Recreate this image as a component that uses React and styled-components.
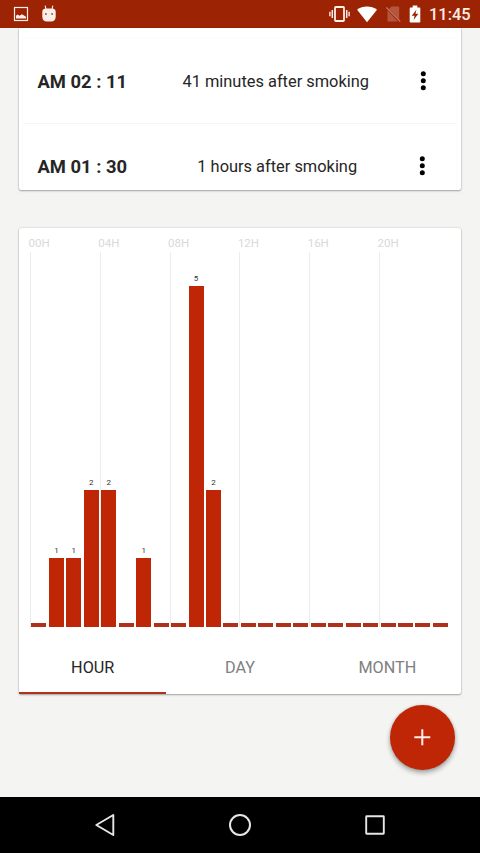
import React from 'react';
import styled, { createGlobalStyle } from 'styled-components';

const GlobalStyle = createGlobalStyle`
  * {
    box-sizing: border-box;
  }

  body {
    margin: 0;
    background: #f4f4f3;
    font-family: Roboto, sans-serif;
  }
`;

const Screen = styled.div`
  display: flex;
  flex-direction: column;
  width: 480px;
  height: 853px;
  overflow: hidden;
  background: #f4f4f3;
`;

const StatusBar = styled.header`
  flex: none;
  display: flex;
  align-items: center;
  justify-content: space-between;
  height: 28px;
  padding: 0 10px 0 13px;
  background: #9c2404;
  color: #fbeee9;
`;

const StatusGroup = styled.div`
  display: flex;
  align-items: center;
  gap: ${(props) => props.$gap}px;
`;

const Clock = styled.span`
  margin-left: 1px;
  width: 41px;
  font-weight: 500;
  font-size: 16.4px;
  line-height: 28px;
  padding-top: 2px;
  white-space: nowrap;
`;

const Content = styled.main`
  position: relative;
  flex: 1;
  min-height: 0;
  padding: 0 19px;
`;

const Card = styled.section`
  width: 442px;
  background: #fff;
  box-shadow: 0 1px 2px rgba(0, 0, 0, 0.3), 0 0 2px rgba(0, 0, 0, 0.2);
`;

const RecordCard = styled(Card)`
  height: 162px;
  padding: 9px 4px 0 3px;
  overflow: hidden;
  border-radius: 0 0 2px 2px;
`;

const RecordList = styled.ul`
  margin: 0;
  padding: 0;
  list-style: none;
  border: 1px solid #fbfbfb;
`;

const RecordRow = styled.li`
  display: grid;
  grid-template-columns: 130px 1fr 72px;
  align-items: center;
  height: ${(props) => props.$height}px;
  padding-left: 14.5px;
  color: #262626;
  border-bottom: 1px solid #f5f5f5;
`;

const RecordTime = styled.strong`
  padding-top: 2px;
  font-weight: 700;
  font-size: 18.4px;
  line-height: 22px;
  white-space: nowrap;
`;

const RecordText = styled.span`
  padding: 2px 0 0 ${(props) => props.$indent}px;
  font-size: 16.4px;
  line-height: 22px;
  text-align: center;
  white-space: nowrap;
`;

const MoreButton = styled.button`
  display: flex;
  margin-left: ${(props) => props.$left}px;
  width: 10px;
  padding: 0;
  border: 0;
  background: none;
`;

const ChartCard = styled(Card)`
  display: flex;
  flex-direction: column;
  height: 466px;
  margin-top: 38px;
  border-radius: 2px;
`;

const HourLabels = styled.div`
  display: grid;
  grid-template-columns: repeat(6, 69.8px);
  height: 24px;
  padding: 8px 0 0 9.5px;
  font-size: 11.5px;
  line-height: 15px;
  color: #d9d9d9;
`;

const Plot = styled.div`
  display: flex;
  align-items: flex-end;
  gap: 2.46px;
  width: 419px;
  height: 375px;
  margin-left: 11px;
  padding-left: 1.45px;
  background: repeating-linear-gradient(
    to right,
    #ececec 0 1px,
    transparent 1px 69.8px
  );
`;

const BarColumn = styled.div`
  flex: none;
  display: flex;
  flex-direction: column;
  align-items: center;
  width: 15px;
`;

const BarValue = styled.span`
  margin-bottom: 2px;
  font-size: 8px;
  line-height: 11px;
  color: #333;
`;

const Bar = styled.div`
  width: 15px;
  background: ${(props) => (props.$empty ? '#b0301a' : '#bf2605')};
`;

const Tabs = styled.nav`
  display: grid;
  grid-template-columns: repeat(3, 1fr);
  flex: 1;
  padding-top: 12px;
`;

const Tab = styled.button`
  padding: 3px 0 0;
  border: 0;
  border-bottom: 2px solid ${(props) => (props.$active ? '#b0341c' : 'transparent')};
  background: none;
  font-family: inherit;
  font-size: 16.2px;
  color: ${(props) => (props.$active ? '#262626' : '#808080')};
`;

const AddButton = styled.button`
  position: absolute;
  right: 25px;
  bottom: 27px;
  display: flex;
  align-items: center;
  justify-content: center;
  width: 65px;
  height: 65px;
  padding: 0;
  border: 0;
  border-radius: 50%;
  background: #bf2605;
  box-shadow: 0 3px 5px rgba(0, 0, 0, 0.32), 0 0 3px rgba(0, 0, 0, 0.14);
`;

const NavBar = styled.footer`
  flex: none;
  display: grid;
  grid-template-columns: repeat(3, 135px);
  justify-content: center;
  justify-items: center;
  align-items: center;
  height: 56px;
  background: #000;
`;

const records = [
  { time: 'AM 02 : 11', text: '41 minutes after smoking', height: 86, indent: 0, moreLeft: 34 },
  { time: 'AM 01 : 30', text: '1 hours after smoking', height: 85, indent: 3, moreLeft: 33 },
];

const hours = ['00H', '04H', '08H', '12H', '16H', '20H'];

const counts = [0, 1, 1, 2, 2, 0, 1, 0, 0, 5, 2, 0, 0, 0, 0, 0, 0, 0, 0, 0, 0, 0, 0, 0];

const tabs = ['HOUR', 'DAY', 'MONTH'];

function PictureIcon() {
  return (
    <svg width='16' height='16' viewBox='0 0 16 16' fill='none'>
      <rect x='1.5' y='1.5' width='13' height='13' stroke='currentColor' strokeWidth='1.2' />
      <path d='M3 12.6V9.8l1.6-1.2 1.9 1.2L9 8.3l4 2.5v1.8z' fill='currentColor' />
    </svg>
  );
}

function AndroidIcon() {
  return (
    <svg width='16' height='18' viewBox='0 0 16 18'>
      <path d='M4.2.6l.8 4M11.8.6l-.8 4' stroke='currentColor' strokeWidth='1.1' />
      <path
        d='M1.3 7C1.3 4.600 3 3.600 5 3.600h6c2 0 3.700 1 3.700 3.400v4.500c0 3.300-1.600 5-4.700 5H6c-3.100 0-4.700-1.700-4.700-5z'
        fill='currentColor'
      />
      <circle cx='4.9' cy='9' r='.9' fill='#7a5148' />
      <circle cx='11.1' cy='9' r='.9' fill='#7a5148' />
    </svg>
  );
}

function VibrateIcon() {
  return (
    <svg width='21' height='18' viewBox='0 0 21 18' fill='none' stroke='currentColor'>
      <rect x='6' y='2' width='9' height='14' rx='.8' strokeWidth='1.8' />
      <path d='M3.3 5v8M17.700 5v8' strokeWidth='1.5' />
      <path d='M.9 6.800v4.400M20.100 6.800v4.400' strokeWidth='1.4' />
    </svg>
  );
}

function WifiIcon() {
  return (
    <svg width='22' height='17' viewBox='-1 0 22 17'>
      <path d='M9 16.300L-.9 3.800C2 1.600 5.200.5 9 .5s7.100 1.100 10 3.300z' fill='#fff' />
    </svg>
  );
}

function NoSimIcon() {
  return (
    <svg width='16' height='18' viewBox='0 0 16 18'>
      <path d='M5.500 1.500h6.700c.6 0 1 .4 1 1v12.300L3 4z' fill='#b4563d' />
      <path d='M1.500 5.600v9.900c0 .6.4 1 1 1h9.400z' fill='#b4563d' />
      <path d='M.4 2.400l13.900 14.200' stroke='#c8745f' strokeWidth='1.3' />
    </svg>
  );
}

function BatteryIcon() {
  return (
    <svg width='12' height='18' viewBox='0 0 12 18'>
      <path d='M3.700.6h4.600v1.800h2c.6 0 1 .4 1 1v13c0 .6-.4 1-1 1H1.700c-.6 0-1-.4-1-1v-13c0-.6.4-1 1-1h2z' fill='#fff' />
      <path d='M7.400 4.800L2.700 10.700h2.900l-1 4.300 4.800-6.200H6.500z' fill='#9c2404' />
    </svg>
  );
}

function MoreIcon() {
  return (
    <svg width='10' height='20' viewBox='0 0 10 20'>
      <circle cx='5.3' cy='2.7' r='2.5' />
      <circle cx='5.3' cy='9.7' r='2.5' />
      <circle cx='5.3' cy='16.7' r='2.5' />
    </svg>
  );
}

export default function App() {
  return (
    <>
      <GlobalStyle />
      <Screen>
        <StatusBar>
          <StatusGroup $gap={12}>
            <PictureIcon />
            <AndroidIcon />
          </StatusGroup>
          <StatusGroup $gap={7}>
            <VibrateIcon />
            <WifiIcon />
            <NoSimIcon />
            <BatteryIcon />
            <Clock>11:45</Clock>
          </StatusGroup>
        </StatusBar>
        <Content>
          <RecordCard>
            <RecordList>
              {records.map((record) => (
                <RecordRow key={record.time} $height={record.height}>
                  <RecordTime>{record.time}</RecordTime>
                  <RecordText $indent={record.indent}>{record.text}</RecordText>
                  <MoreButton $left={record.moreLeft} aria-label='more'>
                    <MoreIcon />
                  </MoreButton>
                </RecordRow>
              ))}
            </RecordList>
          </RecordCard>
          <ChartCard>
            <HourLabels>
              {hours.map((hour) => (
                <span key={hour}>{hour}</span>
              ))}
            </HourLabels>
            <Plot>
              {counts.map((count, hour) => (
                <BarColumn key={hour}>
                  {count > 0 && <BarValue>{count}</BarValue>}
                  <Bar $empty={count === 0} style={{ height: count ? count * 68 + 0.6 : 4 }} />
                </BarColumn>
              ))}
            </Plot>
            <Tabs>
              {tabs.map((tab) => (
                <Tab key={tab} $active={tab === 'HOUR'}>
                  {tab}
                </Tab>
              ))}
            </Tabs>
          </ChartCard>
          <AddButton aria-label='add'>
            <svg width='17' height='17' viewBox='0 0 17 17'>
              <path d='M8.300.3v16M.3 8.300h16' stroke='#fdeee9' strokeWidth='2' />
            </svg>
          </AddButton>
        </Content>
        <NavBar>
          <svg width='24' height='24' viewBox='0 0 24 24' fill='none'>
            <path d='M20.300 2L3.300 12l17 10z' stroke='#e6e6e6' strokeWidth='1.9' strokeLinejoin='round' />
          </svg>
          <svg width='24' height='24' viewBox='0 0 24 24' fill='none'>
            <circle cx='12' cy='12' r='10' stroke='#e6e6e6' strokeWidth='2' />
          </svg>
          <svg width='24' height='24' viewBox='0 0 24 24' fill='none'>
            <rect x='3.2' y='3.2' width='17.6' height='17.6' rx='.5' stroke='#e6e6e6' strokeWidth='1.9' />
          </svg>
        </NavBar>
      </Screen>
    </>
  );
}
